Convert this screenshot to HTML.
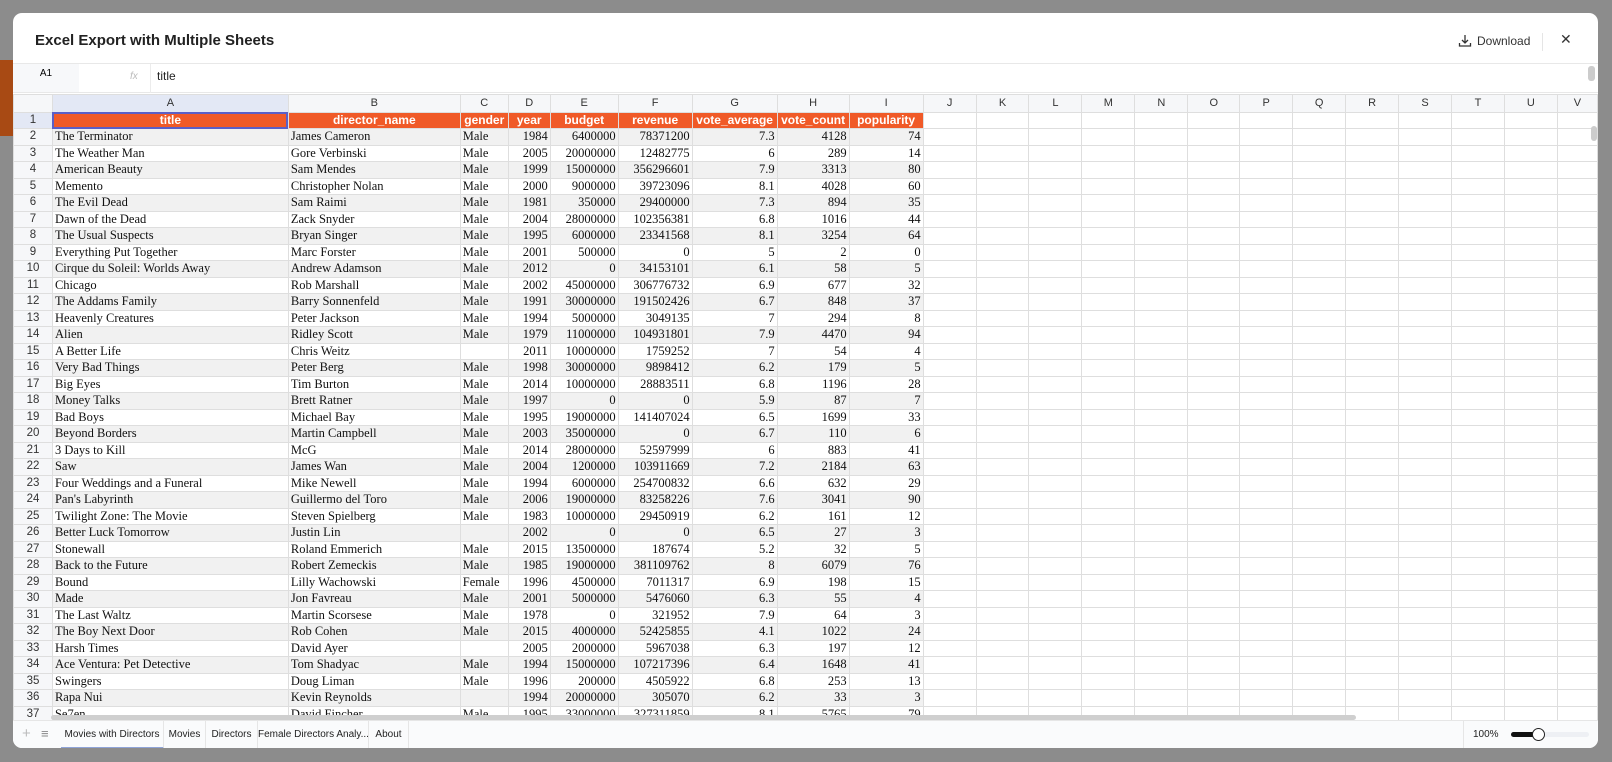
<!DOCTYPE html>
<html><head><meta charset="utf-8"><style>
*{box-sizing:border-box;margin:0;padding:0}
body{width:1612px;height:762px;background:#8c8c8c;position:relative;overflow:hidden;font-family:"Liberation Sans",sans-serif}
.modal{position:absolute;left:13px;top:13px;width:1585px;height:735px;background:#fff;border-radius:9px;overflow:hidden}
.title{position:absolute;left:22px;top:19px;font-size:15px;font-weight:bold;color:#222}
.dl{position:absolute;left:1464px;top:21px;font-size:12px;color:#333}
.sep{position:absolute;left:1529px;top:20px;width:1px;height:18px;background:#e5e5e5}
.x{position:absolute;left:1547px;top:18px;font-size:14px;color:#333}
.fbar{position:absolute;left:0;top:50px;width:1585px;height:30px;border-top:1px solid #e8e8e8;border-bottom:1px solid #e8e8e8}
.grid{position:absolute;left:0;top:81px;width:1585px;height:626px;overflow:hidden}
table{border-collapse:collapse;table-layout:fixed}
td{border:1px solid #dedede;height:16.5px;padding:0 2px;white-space:nowrap;overflow:hidden;font-family:"Liberation Serif",serif;font-size:12.5px;color:#111;line-height:15px}
tr.h td{background:#f6f7f9;font-family:"Liberation Sans",sans-serif;font-size:11px;text-align:center;color:#333;height:17.5px}
td.rn{background:#f6f7f9;font-family:"Liberation Sans",sans-serif;font-size:11.5px;text-align:center;color:#333}
tr.o td.d{background:#f05a28;color:#fff;font-family:"Liberation Sans",sans-serif;font-weight:bold;font-size:12px;text-align:center}
tr:nth-child(odd):not(.h):not(.o) td.d{background:#f1f1f1}
td.r{text-align:right}
.tabs{position:absolute;left:0;top:707px;width:1585px;height:28px;background:#fafbfc;border-top:1px solid #e6e6e6;font-size:10px;color:#222}
.tab{position:absolute;top:0;height:28px;line-height:27px;border-right:1px solid #e6e6e6;text-align:center;white-space:nowrap}
</style></head><body>
<div style="position:absolute;left:0;top:60px;width:13px;height:76px;background:#a84a14"></div>
<div class="modal">
<div class="title">Excel Export with Multiple Sheets</div>
<svg style="position:absolute;left:1445px;top:21px" width="14" height="14" viewBox="0 0 14 14" fill="none" stroke="#333" stroke-width="1.3"><path d="M7 1v8M4 6l3 3 3-3M1.5 9v3h11V9"/></svg>
<div class="dl">Download</div><div class="sep"></div>
<div class="x">✕</div>
<div class="fbar">
<div style="position:absolute;left:0;top:0;width:66px;height:28px;background:#f7f8fa;font-size:10px;text-align:center;line-height:20px">A1</div>
<div style="position:absolute;left:117px;top:7px;font-size:10px;font-style:italic;color:#bbb">fx</div>
<div style="position:absolute;left:137px;top:0;width:1px;height:29px;background:#ececec"></div>
<div style="position:absolute;left:144px;top:5px;font-size:12px;color:#222">title</div>
<div style="position:absolute;left:1575px;top:2px;width:7px;height:15px;background:#ccc;border-radius:3px"></div>
</div>
<div class="grid">
<table>
<colgroup><col style="width:39px"><col style="width:236px"><col style="width:172px"><col style="width:48px"><col style="width:42px"><col style="width:68px"><col style="width:74px"><col style="width:85px"><col style="width:72px"><col style="width:74px"><col style="width:53px"><col style="width:53px"><col style="width:53px"><col style="width:53px"><col style="width:53px"><col style="width:52px"><col style="width:53px"><col style="width:53px"><col style="width:53px"><col style="width:53px"><col style="width:53px"><col style="width:53px"><col style="width:40px"></colgroup>
<tr class="h"><td></td><td style="background:#e3e8f5">A</td><td>B</td><td>C</td><td>D</td><td>E</td><td>F</td><td>G</td><td>H</td><td>I</td><td>J</td><td>K</td><td>L</td><td>M</td><td>N</td><td>O</td><td>P</td><td>Q</td><td>R</td><td>S</td><td>T</td><td>U</td><td>V</td></tr>
<tr class="o"><td class="rn" style="background:#e3e8f5">1</td><td class="d" style="outline:2px solid #5b5fc7;outline-offset:-2px">title</td><td class="d">director_name</td><td class="d">gender</td><td class="d">year</td><td class="d">budget</td><td class="d">revenue</td><td class="d">vote_average</td><td class="d">vote_count</td><td class="d">popularity</td><td></td><td></td><td></td><td></td><td></td><td></td><td></td><td></td><td></td><td></td><td></td><td></td><td></td></tr>
<tbody id="b"></tbody>
</table>
</div>
<div style="position:absolute;left:38px;top:702px;width:1305px;height:5px;background:#cfcfcf;border-radius:3px"></div>
<div style="position:absolute;left:1578px;top:113px;width:6px;height:15px;background:#ccc;border-radius:3px"></div>
<div class="tabs">
<div style="position:absolute;left:9px;top:4px;font-size:15px;color:#bbb">+</div>
<div style="position:absolute;left:28px;top:5px;font-size:13px;color:#888">≡</div>
<div class="tab" style="left:48px;width:103px;border-bottom:2px solid #8fa4d8">Movies with Directors</div>
<div class="tab" style="left:151px;width:42px">Movies</div>
<div class="tab" style="left:193px;width:52px">Directors</div>
<div class="tab" style="left:245px;width:111px">Female Directors Analy...</div>
<div class="tab" style="left:356px;width:40px">About</div>
<div style="position:absolute;left:1450px;top:0;width:1px;height:28px;background:#e6e6e6"></div>
<div style="position:absolute;left:1460px;top:8px;font-size:10px">100%</div>
<div style="position:absolute;left:1498px;top:11px;width:78px;height:5px;background:#eef0f4;border-radius:3px"></div>
<div style="position:absolute;left:1498px;top:11px;width:28px;height:5px;background:#111;border-radius:3px"></div>
<div style="position:absolute;left:1519px;top:7px;width:13px;height:13px;background:#fff;border:1.5px solid #222;border-radius:50%"></div>
</div>
</div>
<script>
const d=`The Terminator|James Cameron|Male|1984|6400000|78371200|7.3|4128|74
The Weather Man|Gore Verbinski|Male|2005|20000000|12482775|6|289|14
American Beauty|Sam Mendes|Male|1999|15000000|356296601|7.9|3313|80
Memento|Christopher Nolan|Male|2000|9000000|39723096|8.1|4028|60
The Evil Dead|Sam Raimi|Male|1981|350000|29400000|7.3|894|35
Dawn of the Dead|Zack Snyder|Male|2004|28000000|102356381|6.8|1016|44
The Usual Suspects|Bryan Singer|Male|1995|6000000|23341568|8.1|3254|64
Everything Put Together|Marc Forster|Male|2001|500000|0|5|2|0
Cirque du Soleil: Worlds Away|Andrew Adamson|Male|2012|0|34153101|6.1|58|5
Chicago|Rob Marshall|Male|2002|45000000|306776732|6.9|677|32
The Addams Family|Barry Sonnenfeld|Male|1991|30000000|191502426|6.7|848|37
Heavenly Creatures|Peter Jackson|Male|1994|5000000|3049135|7|294|8
Alien|Ridley Scott|Male|1979|11000000|104931801|7.9|4470|94
A Better Life|Chris Weitz||2011|10000000|1759252|7|54|4
Very Bad Things|Peter Berg|Male|1998|30000000|9898412|6.2|179|5
Big Eyes|Tim Burton|Male|2014|10000000|28883511|6.8|1196|28
Money Talks|Brett Ratner|Male|1997|0|0|5.9|87|7
Bad Boys|Michael Bay|Male|1995|19000000|141407024|6.5|1699|33
Beyond Borders|Martin Campbell|Male|2003|35000000|0|6.7|110|6
3 Days to Kill|McG|Male|2014|28000000|52597999|6|883|41
Saw|James Wan|Male|2004|1200000|103911669|7.2|2184|63
Four Weddings and a Funeral|Mike Newell|Male|1994|6000000|254700832|6.6|632|29
Pan's Labyrinth|Guillermo del Toro|Male|2006|19000000|83258226|7.6|3041|90
Twilight Zone: The Movie|Steven Spielberg|Male|1983|10000000|29450919|6.2|161|12
Better Luck Tomorrow|Justin Lin||2002|0|0|6.5|27|3
Stonewall|Roland Emmerich|Male|2015|13500000|187674|5.2|32|5
Back to the Future|Robert Zemeckis|Male|1985|19000000|381109762|8|6079|76
Bound|Lilly Wachowski|Female|1996|4500000|7011317|6.9|198|15
Made|Jon Favreau|Male|2001|5000000|5476060|6.3|55|4
The Last Waltz|Martin Scorsese|Male|1978|0|321952|7.9|64|3
The Boy Next Door|Rob Cohen|Male|2015|4000000|52425855|4.1|1022|24
Harsh Times|David Ayer||2005|2000000|5967038|6.3|197|12
Ace Ventura: Pet Detective|Tom Shadyac|Male|1994|15000000|107217396|6.4|1648|41
Swingers|Doug Liman|Male|1996|200000|4505922|6.8|253|13
Rapa Nui|Kevin Reynolds||1994|20000000|305070|6.2|33|3
Se7en|David Fincher|Male|1995|33000000|327311859|8.1|5765|79`.split('\n');
let h='';d.forEach((l,i)=>{const c=l.split('|');h+='<tr><td class="rn">'+(i+2)+'</td>';c.forEach((v,j)=>{h+='<td class="d'+(j>2?' r':'')+'">'+v+'</td>'});for(let k=0;k<13;k++)h+='<td></td>';h+='</tr>'});
document.getElementById('b').innerHTML=h;
</script>
</body></html>
